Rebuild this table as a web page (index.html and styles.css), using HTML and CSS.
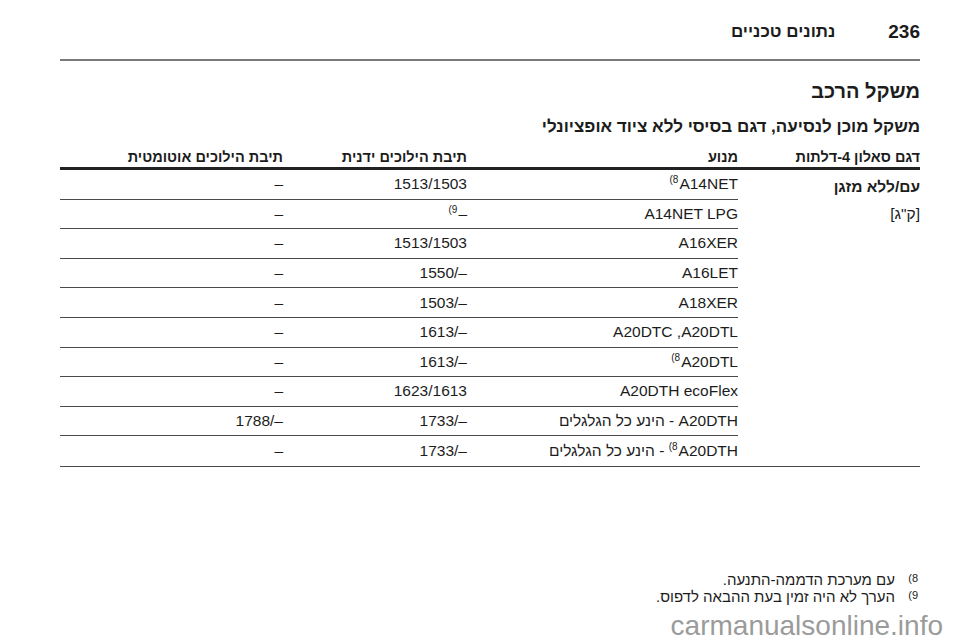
FILE: index.html
```html
<!DOCTYPE html>
<html lang="he" dir="rtl">
<head>
<meta charset="utf-8">
<title>נתונים טכניים</title>
<link rel="stylesheet" href="styles.css">
</head>
<body>
<div class="page">
  <header class="top">
    <span class="pnum">236</span>
    <span class="chapter">נתונים טכניים</span>
  </header>

  <h1 class="title">משקל הרכב</h1>
  <h2 class="subtitle">משקל מוכן לנסיעה, דגם בסיסי ללא ציוד אופציונלי</h2>

  <div class="thead">
    <div class="th">דגם סאלון 4-דלתות</div>
    <div class="th">מנוע</div>
    <div class="th">תיבת הילוכים ידנית</div>
    <div class="th">תיבת הילוכים אוטומטית</div>
  </div>

  <div class="tbody">
    <div class="side">
      <div class="side-b">עם/ללא מזגן</div>
      <div class="side-u">[ק"ג]</div>
    </div>
    <div class="rows">
      <div class="row"><div class="td"><span class="ltr"><sup>(8</sup>A14NET</span></div><div class="td"><span class="ltr">1513/1503</span></div><div class="td">–</div></div>
      <div class="row"><div class="td"><span class="ltr">A14NET LPG</span></div><div class="td"><span class="ltr"><sup>(9</sup>–</span></div><div class="td">–</div></div>
      <div class="row"><div class="td"><span class="ltr">A16XER</span></div><div class="td"><span class="ltr">1513/1503</span></div><div class="td">–</div></div>
      <div class="row"><div class="td"><span class="ltr">A16LET</span></div><div class="td"><span class="ltr">1550/–</span></div><div class="td">–</div></div>
      <div class="row"><div class="td"><span class="ltr">A18XER</span></div><div class="td"><span class="ltr">1503/–</span></div><div class="td">–</div></div>
      <div class="row"><div class="td"><span class="ltr">A20DTC ,A20DTL</span></div><div class="td"><span class="ltr">1613/–</span></div><div class="td">–</div></div>
      <div class="row"><div class="td"><span class="ltr"><sup>(8</sup>A20DTL</span></div><div class="td"><span class="ltr">1613/–</span></div><div class="td">–</div></div>
      <div class="row"><div class="td"><span class="ltr">A20DTH ecoFlex</span></div><div class="td"><span class="ltr">1623/1613</span></div><div class="td">–</div></div>
      <div class="row"><div class="td"><span class="ltr">A20DTH</span> - הינע כל הגלגלים</div><div class="td"><span class="ltr">1733/–</span></div><div class="td"><span class="ltr">1788/–</span></div></div>
      <div class="row"><div class="td"><span class="ltr"><sup>(8</sup>A20DTH</span> - הינע כל הגלגלים</div><div class="td"><span class="ltr">1733/–</span></div><div class="td">–</div></div>
    </div>
  </div>

  <div class="notes">
    <div class="note"><span class="nn"><span class="ltr">(8</span></span><span>עם מערכת הדממה-התנעה.</span></div>
    <div class="note"><span class="nn"><span class="ltr">(9</span></span><span>הערך לא היה זמין בעת ההבאה לדפוס.</span></div>
  </div>

  <div class="watermark">carmanualsonline.info</div>
</div>
</body>
</html>
```

FILE: styles.css
```css
html, body {
  margin: 0;
  padding: 0;
  background: #ffffff;
}

body {
  font-family: "Liberation Sans", Arial, "DejaVu Sans", sans-serif;
  color: #1c1c1c;
  width: 960px;
  height: 642px;
  overflow: hidden;
}

.page {
  position: relative;
  width: 960px;
  height: 642px;
  padding: 0 40px 0 60px;
  box-sizing: border-box;
}

.ltr {
  direction: ltr;
  unicode-bidi: isolate;
}

.top {
  display: flex;
  align-items: center;
  gap: 53px;
  height: 61px;
  padding-top: 4px;
  box-sizing: border-box;
  border-bottom: 2px solid #7a7a7a;
}

.pnum {
  font-size: 19px;
  font-weight: 700;
}

.chapter {
  font-size: 17px;
  font-weight: 700;
}

.title {
  margin: 16px 0 0;
  font-size: 20px;
  line-height: 28px;
  font-weight: 700;
}

.subtitle {
  margin: 10px 0 0;
  font-size: 17px;
  line-height: 24px;
  font-weight: 700;
}

.thead {
  display: grid;
  grid-template-columns: 182px 271px 184px 223px;
  margin-top: 8px;
  border-bottom: 3px solid #222;
}

.th {
  font-size: 14.5px;
  line-height: 20px;
  font-weight: 700;
  text-align: right;
}

.tbody {
  display: flex;
  border-bottom: 1px solid #4a4a4a;
}

.side {
  width: 182px;
  flex: none;
  font-size: 15.5px;
  padding-top: 7px;
}

.side-b {
  font-weight: 700;
  line-height: 20px;
}

.side-u {
  margin-top: 7px;
  line-height: 20px;
}

.rows {
  flex: 1;
}

.row {
  display: grid;
  grid-template-columns: 271px 184px 223px;
  align-items: center;
  height: 29.6px;
  box-sizing: border-box;
  border-bottom: 1px solid #4a4a4a;
}

.row:last-child {
  border-bottom: none;
}

.td {
  font-size: 15.5px;
  text-align: right;
  white-space: nowrap;
}

.td sup {
  font-size: 10px;
  vertical-align: 6px;
  line-height: 0;
  margin-right: 1px;
}

.notes {
  margin-top: 104px;
  font-size: 15px;
  line-height: 17px;
}

.note {
  display: flex;
  align-items: flex-start;
}

.nn {
  width: 25px;
  padding-right: 2px;
  box-sizing: border-box;
  font-size: 11px;
  line-height: 14px;
}

.watermark {
  position: absolute;
  right: 17px;
  top: 610px;
  font-size: 28px;
  line-height: 32px;
  color: #9b9b9b;
  direction: ltr;
}
```
